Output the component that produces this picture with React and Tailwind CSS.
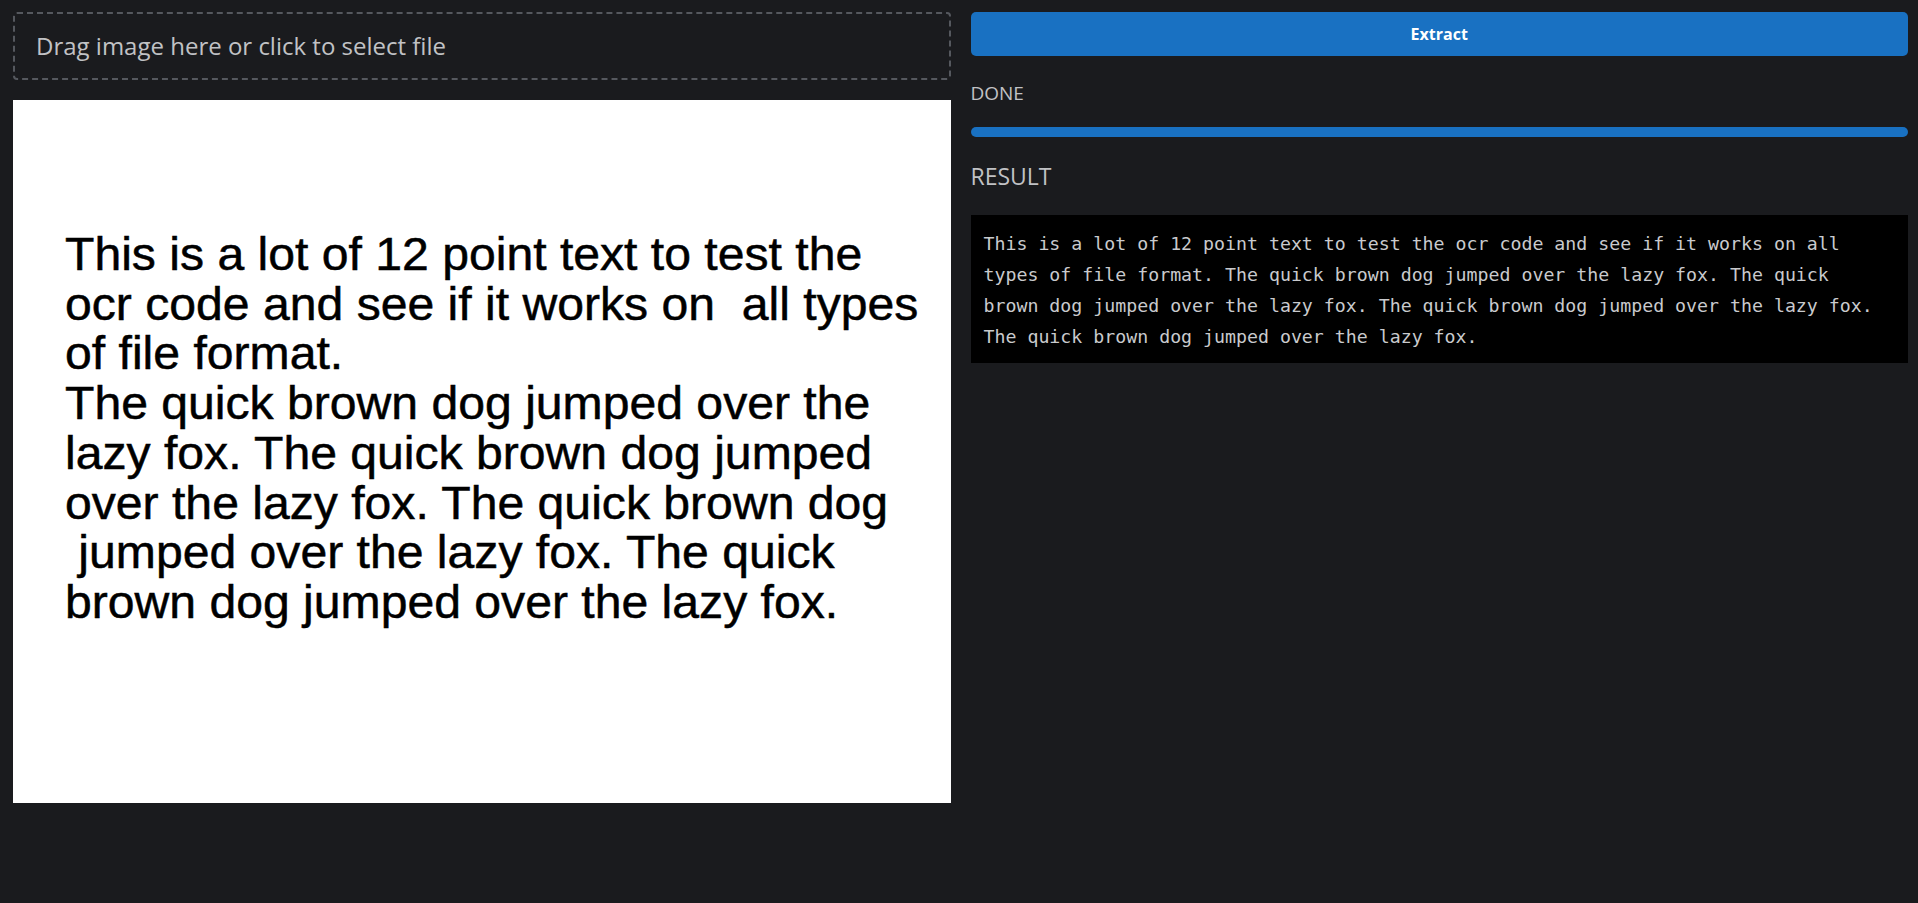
import { useState } from 'react'

const RESULT =
  'This is a lot of 12 point text to test the ocr code and see if it works on all types of file format. The quick brown dog jumped over the lazy fox. The quick brown dog jumped over the lazy fox. The quick brown dog jumped over the lazy fox. The quick brown dog jumped over the lazy fox.'

// lines as they sit in the uploaded picture
const IMAGE_LINES = [
  'This is a lot of 12 point text to test the',
  'ocr code and see if it works on  all types',
  'of file format.',
  'The quick brown dog jumped over the',
  'lazy fox. The quick brown dog jumped',
  'over the lazy fox. The quick brown dog',
  ' jumped over the lazy fox. The quick',
  'brown dog jumped over the lazy fox.',
]

function Preview() {
  return (
    <div className="h-[703px] overflow-hidden bg-white pl-[52px] pt-[130px]">
      <div
        className="origin-top-left scale-x-[1.035] whitespace-pre text-[46.5px] leading-[49.7px] text-black [-webkit-text-stroke:0.5px_black]"
        style={{ fontFamily: '"Liberation Sans", Arial, sans-serif' }}
      >
        {IMAGE_LINES.map((line, i) => (
          <div key={i}>{line}</div>
        ))}
      </div>
    </div>
  )
}

export default function App() {
  const [status] = useState('DONE')

  return (
    <div
      className="min-h-[903px] bg-[#1a1b1e] text-[#c1c2c5]"
      style={{ fontFamily: '"Open Sans", "Noto Sans", sans-serif' }}
    >
      <div className="flex gap-5 pl-[13px] pr-[10px] pt-3">
        {/* left: dropzone + preview */}
        <div className="flex flex-1 flex-col">
          <div className="flex h-[68px] cursor-pointer items-center rounded border-2 border-dashed border-[#55585e] px-[21px]">
            <span className="text-[24px]">
              Drag image here or click to select file
            </span>
          </div>
          <div className="mt-5">
            <Preview />
          </div>
        </div>

        {/* right: action + output */}
        <div className="flex flex-1 flex-col">
          <button className="h-[44px] w-full rounded-[5px] bg-[#1971c2] text-[16px] font-bold text-white">
            Extract
          </button>
          <div className="mt-[24px] text-[19px] leading-[27px]">{status}</div>
          <div className="mt-[20px] h-[10px] w-full rounded-full bg-[#1971c2]" />
          <h2 className="mt-[21px] text-[23px] leading-[36px]">RESULT</h2>
          <div
            className="mt-[21px] bg-black pb-[11px] pl-[13px] pr-[25px] pt-[13px] text-[18.24px] leading-[31px] text-[#c9cacd]"
            style={{ fontFamily: '"DejaVu Sans Mono", "Liberation Mono", monospace' }}
          >
            {RESULT}
          </div>
        </div>
      </div>
    </div>
  )
}
